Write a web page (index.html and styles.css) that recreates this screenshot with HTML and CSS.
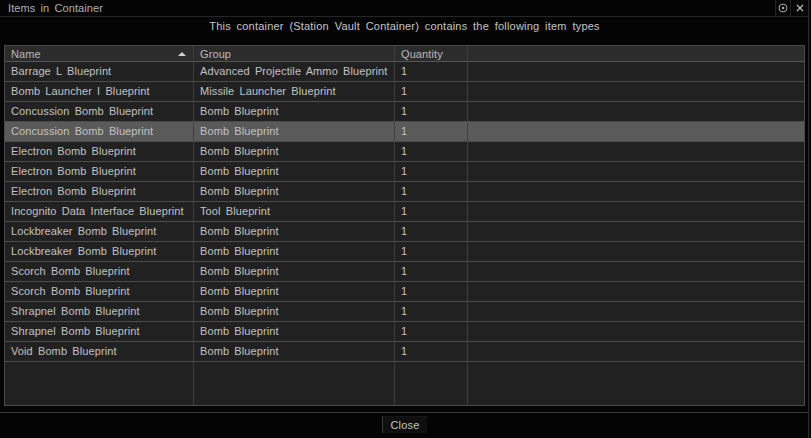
FILE: index.html
```html
<!DOCTYPE html>
<html>
<head>
<meta charset="utf-8">
<link rel="stylesheet" href="styles.css">
</head>
<body>
<div class="window">
  <div class="titlebar">
    <span class="title">Items in Container</span>
    <div class="controls">
      <span class="ctrl">
        <svg width="10" height="10" viewBox="0 0 10 10"><circle cx="5" cy="5" r="4" fill="none" stroke="#a8a8a8" stroke-width="1"/><circle cx="5" cy="5" r="1.3" fill="#a8a8a8"/></svg>
      </span>
      <span class="ctrl">
        <svg width="10" height="10" viewBox="0 0 10 10"><path d="M2 2 L8 8 M8 2 L2 8" stroke="#c0c0c0" stroke-width="1.2"/></svg>
      </span>
    </div>
  </div>
  <div class="subtitle">This container (Station Vault Container) contains the following item types</div>
  <div class="table">
    <div class="row head">
      <div class="cell name">Name<span class="sort"></span></div>
      <div class="cell">Group</div>
      <div class="cell">Quantity</div>
      <div class="cell last"></div>
    </div>
    <div class="row"><div class="cell">Barrage L Blueprint</div><div class="cell">Advanced Projectile Ammo Blueprint</div><div class="cell">1</div><div class="cell last"></div></div>
    <div class="row"><div class="cell">Bomb Launcher I Blueprint</div><div class="cell">Missile Launcher Blueprint</div><div class="cell">1</div><div class="cell last"></div></div>
    <div class="row"><div class="cell">Concussion Bomb Blueprint</div><div class="cell">Bomb Blueprint</div><div class="cell">1</div><div class="cell last"></div></div>
    <div class="row selected"><div class="cell">Concussion Bomb Blueprint</div><div class="cell">Bomb Blueprint</div><div class="cell">1</div><div class="cell last"></div></div>
    <div class="row"><div class="cell">Electron Bomb Blueprint</div><div class="cell">Bomb Blueprint</div><div class="cell">1</div><div class="cell last"></div></div>
    <div class="row"><div class="cell">Electron Bomb Blueprint</div><div class="cell">Bomb Blueprint</div><div class="cell">1</div><div class="cell last"></div></div>
    <div class="row"><div class="cell">Electron Bomb Blueprint</div><div class="cell">Bomb Blueprint</div><div class="cell">1</div><div class="cell last"></div></div>
    <div class="row"><div class="cell">Incognito Data Interface Blueprint</div><div class="cell">Tool Blueprint</div><div class="cell">1</div><div class="cell last"></div></div>
    <div class="row"><div class="cell">Lockbreaker Bomb Blueprint</div><div class="cell">Bomb Blueprint</div><div class="cell">1</div><div class="cell last"></div></div>
    <div class="row"><div class="cell">Lockbreaker Bomb Blueprint</div><div class="cell">Bomb Blueprint</div><div class="cell">1</div><div class="cell last"></div></div>
    <div class="row"><div class="cell">Scorch Bomb Blueprint</div><div class="cell">Bomb Blueprint</div><div class="cell">1</div><div class="cell last"></div></div>
    <div class="row"><div class="cell">Scorch Bomb Blueprint</div><div class="cell">Bomb Blueprint</div><div class="cell">1</div><div class="cell last"></div></div>
    <div class="row"><div class="cell">Shrapnel Bomb Blueprint</div><div class="cell">Bomb Blueprint</div><div class="cell">1</div><div class="cell last"></div></div>
    <div class="row"><div class="cell">Shrapnel Bomb Blueprint</div><div class="cell">Bomb Blueprint</div><div class="cell">1</div><div class="cell last"></div></div>
    <div class="row"><div class="cell">Void Bomb Blueprint</div><div class="cell">Bomb Blueprint</div><div class="cell">1</div><div class="cell last"></div></div>
    <div class="row filler"><div class="cell"></div><div class="cell"></div><div class="cell"></div><div class="cell last"></div></div>
  </div>
  <div class="footer">
    <button class="close">Close</button>
  </div>
</div>
</body>
</html>
```
FILE: styles.css
```css
html, body {
  margin: 0;
  padding: 0;
}
body {
  width: 811px;
  height: 438px;
  background: #0a0a0a;
  font-family: "Liberation Sans", Arial, sans-serif;
  font-size: 11px;
  letter-spacing: 0.1px;
  word-spacing: 2px;
  color: #c2c2c2;
  overflow: hidden;
}
.window {
  width: 808px;
  height: 438px;
  background: #040404;
  border-right: 1px solid #2c2c2c;
  display: flex;
  flex-direction: column;
}
.titlebar {
  height: 16px;
  border-bottom: 1px solid #262626;
  display: flex;
  align-items: center;
  justify-content: space-between;
  padding-left: 8px;
}
.title {
  color: #b0b0b0;
  line-height: 16px;
}
.controls {
  display: flex;
  height: 16px;
}
.ctrl {
  width: 14px;
  height: 16px;
  border-left: 1px solid #222;
  display: flex;
  align-items: center;
  justify-content: center;
}
.ctrl:last-child {
  width: 17px;
}
.subtitle {
  height: 17px;
  line-height: 17px;
  margin-top: 1px;
  text-align: center;
  color: #c4c4c4;
  letter-spacing: 0.2px;
  word-spacing: 2.5px;
  padding-left: 1px;
}
.table {
  margin: 10px 3px 0 4px;
  border: 1px solid #4a4a4a;
  background: #212121;
  height: 359px;
  display: flex;
  flex-direction: column;
}
.row {
  display: grid;
  grid-template-columns: 189px 201px 73px 1fr;
  height: 19px;
  border-bottom: 1px solid #4c4c4c;
}
.row.head {
  height: 15px;
  background: #2c2c2c;
  border-bottom: 1px solid #555;
}
.row.selected {
  background: #5a5a5a;
}
.row.filler {
  flex: 1;
  border-bottom: none;
}
.cell {
  border-right: 1px solid #3e3e3e;
  padding-left: 6px;
  line-height: 19px;
  white-space: nowrap;
  overflow: hidden;
  position: relative;
}
.head .cell {
  line-height: 16px;
  color: #bababa;
}
.cell.last {
  border-right: none;
}
.sort {
  position: absolute;
  right: 7px;
  top: 6px;
  width: 0;
  height: 0;
  border-left: 4px solid transparent;
  border-right: 4px solid transparent;
  border-bottom: 4px solid #d0d0d0;
}
.footer {
  margin-top: 6px;
  border-top: 1px solid #3a3a3a;
  display: flex;
  justify-content: center;
  padding-top: 3px;
  padding-left: 1px;
}
.close {
  font-family: "Liberation Sans", Arial, sans-serif;
  font-size: 11px;
  letter-spacing: 0.2px;
  color: #c4c4c4;
  background: #101010;
  border: none;
  border-left: 1px solid #3a3a3a;
  border-top: 1px solid #161616;
  width: 45px;
  height: 17px;
  padding: 0;
  line-height: 16px;
}
```
